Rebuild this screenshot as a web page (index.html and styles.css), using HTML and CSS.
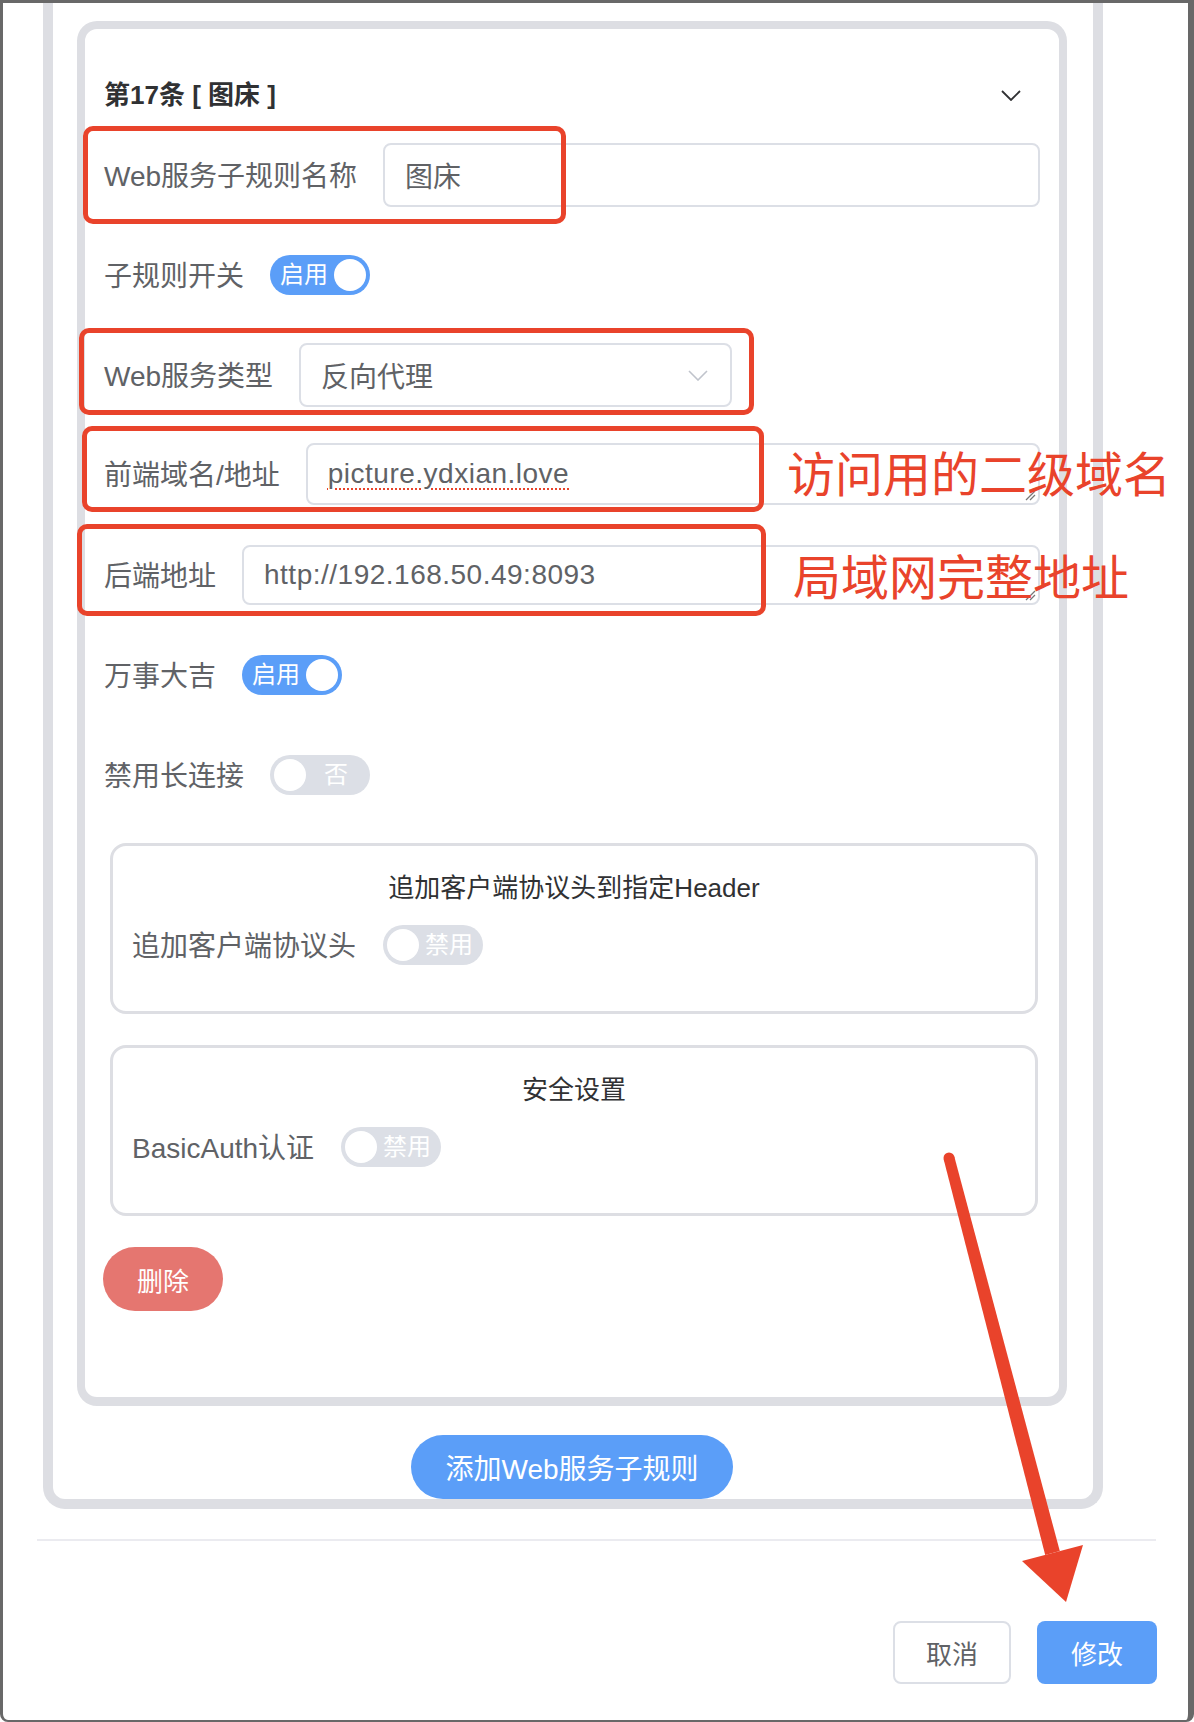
FILE: index.html
```html
<!DOCTYPE html>
<html lang="zh-CN">
<head>
    <meta charset="UTF-8">
    <title>编辑Web服务规则</title>
    <link rel="stylesheet" href="styles.css">
</head>
<body>
<div class="window">
    <div class="rule-list">
        <div class="rule-card">
            <div class="card-header">
                <span class="card-title">第17条 [ 图床 ]</span>
                <svg class="card-arrow" width="20" height="11" viewBox="0 0 20 11"><path d="M1 1 L10 10 L19 1" fill="none" stroke="#303133" stroke-width="1.8"/></svg>
            </div>

            <div class="form-row">
                <label class="form-label">Web服务子规则名称</label>
                <div class="input">图床</div>
            </div>

            <div class="form-row">
                <label class="form-label">子规则开关</label>
                <span class="switch on"><span class="switch-text">启用</span><span class="knob"></span></span>
            </div>

            <div class="form-row">
                <label class="form-label">Web服务类型</label>
                <div class="select">
                    <span>反向代理</span>
                    <svg width="20" height="11" viewBox="0 0 20 11"><path d="M1 1 L10 10 L19 1" fill="none" stroke="#c0c4cc" stroke-width="1.6"/></svg>
                </div>
            </div>

            <div class="form-row row-front">
                <label class="form-label">前端域名/地址</label>
                <div class="textarea">
                    <span class="misspelled">picture.ydxian.love</span>
                    <svg class="grip" width="12" height="12" viewBox="0 0 12 12"><path d="M11 2 L2 11 M11 6 L6 11" stroke="#777" stroke-width="1.3"/></svg>
                </div>
            </div>

            <div class="form-row row-back">
                <label class="form-label">后端地址</label>
                <div class="textarea">
                    <span>http://192.168.50.49:8093</span>
                    <svg class="grip" width="12" height="12" viewBox="0 0 12 12"><path d="M11 2 L2 11 M11 6 L6 11" stroke="#777" stroke-width="1.3"/></svg>
                </div>
            </div>

            <div class="form-row">
                <label class="form-label">万事大吉</label>
                <span class="switch on"><span class="switch-text">启用</span><span class="knob"></span></span>
            </div>

            <div class="form-row">
                <label class="form-label">禁用长连接</label>
                <span class="switch"><span class="knob"></span><span class="switch-text">否</span></span>
            </div>

            <div class="sub-box first">
                <div class="sub-title">追加客户端协议头到指定Header</div>
                <div class="sub-row">
                    <label class="form-label">追加客户端协议头</label>
                    <span class="switch"><span class="knob"></span><span class="switch-text">禁用</span></span>
                </div>
            </div>

            <div class="sub-box">
                <div class="sub-title">安全设置</div>
                <div class="sub-row">
                    <label class="form-label">BasicAuth认证</label>
                    <span class="switch"><span class="knob"></span><span class="switch-text">禁用</span></span>
                </div>
            </div>

            <button class="btn-delete">删除</button>
        </div>

        <div class="add-wrap">
            <button class="btn-add">添加Web服务子规则</button>
        </div>
    </div>

    <div class="dialog-footer">
        <button class="btn btn-cancel">取消</button>
        <button class="btn btn-primary">修改</button>
    </div>

    <!-- 标注 -->
    <div class="mark mark-name"></div>
    <div class="mark mark-type"></div>
    <div class="mark mark-front"></div>
    <div class="mark mark-back"></div>
    <div class="note note-front">访问用的二级域名</div>
    <div class="note note-back">局域网完整地址</div>
    <svg class="arrow" width="1194" height="1722" viewBox="0 0 1194 1722">
        <circle cx="949" cy="1158" r="5.5" fill="#e9432b"/>
        <polygon points="943.7,1159.4 954.3,1156.6 1059.8,1551.1 1045.2,1554.9" fill="#e9432b"/>
        <polygon points="1022,1561 1083,1545 1066,1602" fill="#e9432b"/>
    </svg>
</div>
</body>
</html>
```

FILE: styles.css
```css
* {
    box-sizing: border-box;
}

body {
    margin: 0;
    font-family: "Liberation Sans", "Noto Sans CJK SC", sans-serif;
    color: #606266;
    background: #fff;
}

.window {
    position: relative;
    width: 1194px;
    height: 1722px;
    border: solid #686868;
    border-width: 3px 6px 2px 3px;
    border-radius: 0 0 8px 8px;
    overflow: hidden;
    background: #fff;
}

/* 外层规则列表 */
.rule-list {
    margin: 0 85px 0 40px;
    border: 10px solid #dddee3;
    border-top: 0;
    border-radius: 0 0 22px 22px;
    padding: 18px 26px 0 24px;
}

.rule-card {
    border: 8px solid #dddee3;
    border-bottom-width: 9px;
    border-radius: 20px;
    padding: 18px 19px 86px 19px;
}

.card-header {
    display: flex;
    align-items: center;
    justify-content: space-between;
    height: 96px;
    padding: 0 19px 6px 0;
}

.card-arrow {
    margin-top: 6px;
}

.card-title {
    font-size: 26px;
    font-weight: 700;
    color: #303133;
}

/* 表单行 */
.form-row {
    display: flex;
    align-items: center;
    gap: 26px;
    min-height: 64px;
    margin-bottom: 36px;
}

.row-front {
    min-height: 0;
    margin-bottom: 40px;
}

.row-back {
    min-height: 0;
    margin-bottom: 38px;
}

.form-label {
    font-size: 28px;
    line-height: 40px;
    padding-top: 4px;
    color: #606266;
    white-space: nowrap;
}

.input,
.select,
.textarea {
    display: flex;
    align-items: center;
    height: 64px;
    border: 2px solid #dcdfe6;
    border-radius: 8px;
    padding: 0 20px;
    font-size: 28px;
    color: #606266;
}

.input {
    flex: 1;
}

.select {
    width: 433px;
    justify-content: space-between;
    padding-right: 22px;
}

.textarea {
    flex: 1;
    height: 62px;
    position: relative;
    letter-spacing: 0.5px;
}

.row-back .textarea {
    height: 60px;
}

.grip {
    position: absolute;
    right: 2px;
    bottom: 2px;
}

.misspelled {
    text-decoration: underline dotted #e9432b;
    text-decoration-thickness: 2px;
    text-underline-offset: 5px;
}

/* 开关 */
.switch {
    display: flex;
    align-items: center;
    width: 100px;
    height: 40px;
    padding: 4px;
    border-radius: 20px;
    background: #dcdfe6;
    flex: none;
}

.switch.on {
    background: #5b9ef8;
}

.knob {
    width: 32px;
    height: 32px;
    border-radius: 50%;
    background: #fff;
    flex: none;
}

.switch-text {
    flex: 1;
    text-align: center;
    color: #fff;
    font-size: 24px;
    line-height: 32px;
}

/* 子配置框 */
.sub-box {
    height: 171px;
    border: 3px solid #dddee3;
    border-radius: 16px;
    margin: 0 2px 31px 6px;
    padding: 24px 19px 0;
}

.sub-box.first {
    margin-top: 2px;
}

.sub-title {
    text-align: center;
    font-size: 26px;
    line-height: 36px;
    color: #303133;
}

.sub-row {
    display: flex;
    align-items: center;
    gap: 27px;
    margin-top: 17px;
}

/* 按钮 */
button {
    font-family: inherit;
    cursor: pointer;
}

.btn-delete {
    display: block;
    width: 120px;
    height: 64px;
    margin-left: -1px;
    border: 0;
    border-radius: 32px;
    background: #e57670;
    color: #fff;
    font-size: 26px;
}

.add-wrap {
    padding-top: 29px;
}

.btn-add {
    display: block;
    width: 322px;
    height: 64px;
    margin: 0 auto;
    border: 0;
    border-radius: 32px;
    background: #5b9ef8;
    color: #fff;
    font-size: 28px;
}

.dialog-footer {
    margin: 30px 32px 0 34px;
    border-top: 2px solid #ebebf0;
    padding-top: 80px;
    display: flex;
    justify-content: flex-end;
    gap: 26px;
}

.btn {
    height: 63px;
    border-radius: 8px;
    font-size: 26px;
}

.btn-cancel {
    width: 118px;
    background: #fff;
    border: 2px solid #dcdfe6;
    color: #606266;
}

.btn-primary {
    width: 120px;
    background: #5b9ef8;
    border: 0;
    color: #fff;
    margin-right: -1px;
}

/* 红色标注 */
.mark {
    position: absolute;
    border: 5px solid #e9432b;
    border-radius: 10px;
}

.mark-name {
    left: 80px;
    top: 123px;
    width: 483px;
    height: 98px;
}

.mark-type {
    left: 76px;
    top: 325px;
    width: 675px;
    height: 87px;
}

.mark-front {
    left: 79px;
    top: 423px;
    width: 682px;
    height: 86px;
}

.mark-back {
    left: 74px;
    top: 521px;
    width: 689px;
    height: 92px;
}

.note {
    position: absolute;
    color: #e9432b;
    font-family: "Noto Sans CJK SC", sans-serif;
    font-size: 48px;
    line-height: 48px;
    white-space: nowrap;
}

.note-front {
    left: 784px;
    top: 444px;
}

.note-back {
    left: 790px;
    top: 547px;
}

.arrow {
    position: absolute;
    left: -3px;
    top: -3px;
    pointer-events: none;
}
```
